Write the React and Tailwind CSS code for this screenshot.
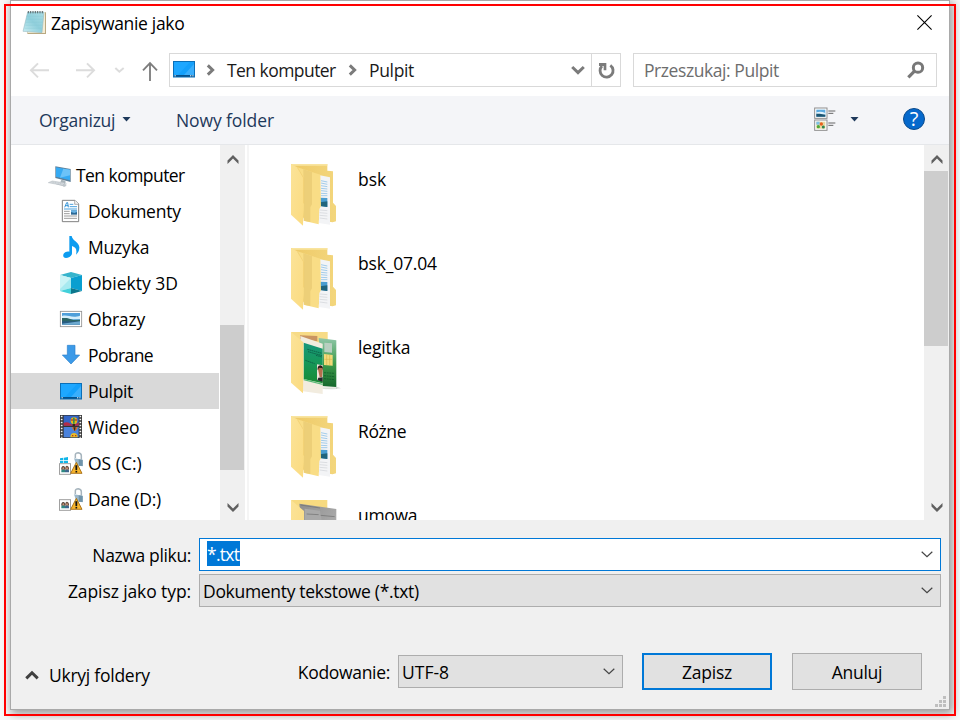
import React from "react";

/* ---------- small glyphs ---------- */

function Notepad() {
  return (
    <svg width="26" height="28" viewBox="66 26 78 84" className="shrink-0">
      <path d="M88 36 H138 V101 H82 Z" fill="#b9a981" />
      <path d="M86 35 H135 V98 H84 Z" fill="#f4ecd4" />
      <path d="M83 35 H132 L126 97 L69 93 Z" fill="url(#np)" stroke="#8fb3bb" strokeWidth="1.5" />
      <path d="M79 48 H129 M78 57 H128 M77 66 H127 M76 75 H126 M74 84 H125" stroke="#86c4d0" strokeWidth="1" />
      <path d="M85 32 v7 M92 32 v7 M99 32 v7 M106 32 v7 M113 32 v7 M120 32 v7 M127 32 v7" stroke="#5c6668" strokeWidth="3" />
      <defs>
        <linearGradient id="np" x1="0" y1="1" x2="1" y2="0">
          <stop offset="0" stopColor="#c9edf2" />
          <stop offset=".5" stopColor="#8fcfdc" />
          <stop offset="1" stopColor="#a9dce4" />
        </linearGradient>
      </defs>
    </svg>
  );
}

function DesktopIcon() {
  return (
    <svg width="22" height="17" viewBox="0 0 22 17" className="shrink-0">
      <rect width="22" height="16.5" fill="#0b6fb8" />
      <rect x="1" y="1" width="20" height="13" fill="#14a0fb" />
      <path d="M11 14 L21 3 V14 Z" fill="#3aaefc" />
      <path d="M1 1 H17 L5 14 H1 Z" fill="#1ea7ff" />
      <rect x="1" y="14" width="20" height="1.6" fill="#06518c" />
      <path d="M1.5 14.8 h1.3 M17 14.8 h1.3 M19.3 14.8 h1.3" stroke="#fff" strokeWidth="1" />
    </svg>
  );
}

function Crumb() {
  return (
    <svg width="9" height="12" viewBox="0 0 9 12" className="shrink-0">
      <path d="M1.800 1.400 L6.600 6 L1.800 10.600" fill="none" stroke="#7b7b7b" strokeWidth="3" />
    </svg>
  );
}

function ScrollArrow({ down }) {
  return (
    <svg width="12" height="11" viewBox="0 0 12 11" className="shrink-0">
      {down ? (
        <path d="M0.5 1 L6 6.4 L11.5 1 V4.6 L6 10 L0.5 4.6 Z" fill="#606060" />
      ) : (
        <path d="M0.5 10 L6 4.6 L11.5 10 V6.4 L6 1 L0.5 6.4 Z" fill="#606060" />
      )}
    </svg>
  );
}

function ComboArrow() {
  return (
    <svg width="12" height="7" viewBox="0 0 12 7" className="shrink-0">
      <path d="M0.7 0.7 L6 5.6 L11.3 0.7" fill="none" stroke="#444" strokeWidth="1.2" />
    </svg>
  );
}

/* ---------- navigation tree icons ---------- */

function ComputerIcon() {
  return (
    <svg width="26" height="26" viewBox="144 48 78 78">
      <path d="M166 61 L212 69 V108 L166 96 Z" fill="#5d7f98" />
      <path d="M168 64 L210 71 V103 L168 92 Z" fill="#35aaf3" />
      <path d="M190 68 L210 71 V88 L180 95 Z" fill="#6cc3f8" />
      <path d="M184 101 L196 104 L197 112 L181 109 Z" fill="#a9b4ba" />
      <path d="M176 108 L202 113 L190 121 L168 115 Z" fill="#c5ccd1" />
      <path d="M157 105 L195 111 L188 118 L145 110 Z" fill="#d8dde1" stroke="#a7afb5" strokeWidth="1.4" />
      <path d="M155 108 L189 114" stroke="#9ea8ae" strokeWidth="1.4" strokeDasharray="3 2" />
      <path d="M185 118 l8 -3 l7 4 l-8 4 Z" fill="#bec5ca" />
    </svg>
  );
}

function DocumentsIcon() {
  return (
    <svg width="26" height="26" viewBox="174 159 78 78">
      <path d="M187 166 H225 L236 177 V230 H187 Z" fill="#fff" stroke="#777" strokeWidth="2.8" />
      <path d="M224 166 V178 H236" fill="#f3f3f3" stroke="#8b8b8b" strokeWidth="2" />
      <path d="M194 187 L200 173 H203 L205 187 M196 182 H205" fill="none" stroke="#1683d0" strokeWidth="2.6" />
      <path d="M209 178 H220 M209 185 H231 M192 192 H231" stroke="#2f92d8" strokeWidth="2.6" />
      <path d="M192 199 H209 M192 206 H209 M192 213 H231 M192 220 H231" stroke="#8f8f8f" strokeWidth="2.6" />
      <rect x="213" y="196" width="18" height="13" fill="#2c6894" />
      <path d="M213 196 h18 v5 l-8 3 l-10 -3 Z" fill="#6ab4e5" />
    </svg>
  );
}

function MusicIcon() {
  return (
    <svg width="26" height="26" viewBox="174 267 78 78">
      <path d="M208 273 H215 C217 287 236 291 238 306 C239 316 234 324 228 329 C231 315 229 307 216 303 V324 C216 334 205 339 198 339 C187 338 187 326 197 321 C201 319 205 319 208 320 Z" fill="#0c9cf0" />
    </svg>
  );
}

function CubeIcon() {
  return (
    <svg width="26" height="26" viewBox="174 375 78 78">
      <path d="M180 390 L213 381 L246 390 L213 399 Z" fill="#36b4cc" />
      <path d="M180 390 L213 399 V429 L180 438 Z" fill="#a7eaf0" />
      <path d="M180 390 L213 399 L180 432 Z" fill="#caf4f6" />
      <path d="M246 390 L213 399 V429 L246 438 Z" fill="#099fd0" />
      <path d="M180 438 L213 429 V447 Z" fill="#42d0da" />
      <path d="M246 438 L213 429 V447 Z" fill="#0c778d" />
    </svg>
  );
}

function PicturesIcon() {
  return (
    <svg width="26" height="26" viewBox="174 483 78 78">
      <rect x="181" y="499" width="64" height="46" fill="#fff" stroke="#909090" strokeWidth="2.5" />
      <rect x="186" y="504" width="54" height="35" fill="#4f9fda" />
      <path d="M186 513 C202 507 215 521 240 512 V523 H186 Z" fill="#d4eefb" />
      <path d="M186 519 L201 519 L220 525 L240 524 V531 H186 Z" fill="#2c6666" />
      <rect x="186" y="529" width="54" height="10" fill="#285c83" />
      <path d="M186 536 L240 529 V539 H186 Z" fill="#6da9cf" />
    </svg>
  );
}

function DownloadIcon() {
  return (
    <svg width="26" height="26" viewBox="174 21 78 78">
      <path d="M202 31 H225 V60 H239 L213 87 L187 60 H202 Z" fill="#3c9ae8" stroke="#2a80cc" strokeWidth="2" />
    </svg>
  );
}

function VideoIcon() {
  return (
    <svg width="26" height="26" viewBox="174 237 78 78">
      <rect x="180" y="240" width="66" height="69" fill="#333" />
      <path d="M185 242 V308 M241 242 V308" stroke="#f5f5f5" strokeWidth="5" strokeDasharray="5 4" />
      <rect x="191" y="242" width="45" height="30" fill="#3466c8" />
      <rect x="191" y="276" width="45" height="31" fill="#4a82dc" />
      <path d="M191 264 q10 -5 20 2 t25 -4 v10 h-45 Z" fill="#b52c48" />
      <ellipse cx="222" cy="257" rx="10" ry="10" fill="#e6b71c" />
      <path d="M213 253 h18 v4 h-18 Z" fill="#bf392c" />
      <path d="M219 248 h5 v18 h-5 Z" fill="#349251" />
      <path d="M218 267 h7 v6 h-7 Z" fill="#3a2717" />
      <path d="M215 277 h19 l-7 10 h-5 Z" fill="#dc6c20" />
      <path d="M220 277 h7 l-2 10 h-2 Z" fill="#2a2a22" />
      <path d="M211 307 q0 -13 12 -13 q10 1 10 13 Z" fill="#e9bd22" />
      <path d="M216 300 h4 v4 h-4 Z M225 300 h4 v4 h-4 Z" fill="#b53528" />
    </svg>
  );
}

function DriveIcon({ windows }) {
  return (
    <svg width="26" height="26" viewBox="174 345 78 78">
      {windows && (
        <path d="M180 370 L190 368 V375 H180 Z M192 368 L204 366 V375 H192 Z M180 377 H190 V384 H180 Z M192 377 H204 V384 H192 Z" fill="#11b5e8" />
      )}
      <path d="M226 369 V359 Q227 353 235 353 Q244 354 244 362 V374" fill="none" stroke="#a6b4bd" strokeWidth="4.5" />
      <path d="M222 370 L248 374 V394 L229 391 Z" fill="#9bb7c9" />
      <path d="M236 373 L248 375 V393 L237 392 Z" fill="#6f93aa" />
      <rect x="178.500" y="386" width="33" height="32" fill="#fff" stroke="#a0a0a0" strokeWidth="3" />
      <path d="M184 404 Q183 393 190 393 Q196 393 196 404 Z" fill="#50443b" />
      <path d="M196 404 Q195 392 201 392 Q208 393 207 404 Z" fill="#695044" />
      <path d="M184 412 V406 Q189 401 195 405 V412 Z" fill="#2e8780" />
      <path d="M195 412 V406 Q201 401 207 406 V412 Z" fill="#3d668c" />
      <circle cx="190" cy="400" r="3" fill="#c99375" />
      <circle cx="201" cy="400" r="3" fill="#c99375" />
      <path d="M229 382 L246 415 H212 Z" fill="#f7b52c" stroke="#a4690e" strokeWidth="2.6" strokeLinejoin="round" />
      <path d="M226 391 H232 L231.500 405 H226.500 Z" fill="#111" />
      <rect x="226.500" y="407.500" width="5" height="5" fill="#111" />
    </svg>
  );
}

/* ---------- large folder icons ---------- */

function FolderDefs() {
  return (
    <svg width="0" height="0" className="absolute">
      <defs>
        <linearGradient id="leaf" x1="0" y1="0" x2="1" y2="1">
          <stop offset="0" stopColor="#fbe398" />
          <stop offset="1" stopColor="#fbdb80" />
        </linearGradient>
        <linearGradient id="back" x1="0" y1="0" x2="1" y2="0">
          <stop offset="0" stopColor="#eec966" />
          <stop offset="1" stopColor="#f3d67d" />
        </linearGradient>
        <linearGradient id="card" x1="0" y1="0" x2="0" y2="1">
          <stop offset="0" stopColor="#18977b" />
          <stop offset=".45" stopColor="#16985c" />
          <stop offset="1" stopColor="#178b34" />
        </linearGradient>
        <linearGradient id="card2" x1="0" y1="0" x2="0" y2="1">
          <stop offset="0" stopColor="#8fc6a8" />
          <stop offset=".5" stopColor="#3e9b4c" />
          <stop offset="1" stopColor="#12642a" />
        </linearGradient>
        <linearGradient id="scan" x1="0" y1="0" x2="1" y2="1">
          <stop offset="0" stopColor="#8d8d8d" />
          <stop offset="1" stopColor="#b9b9b9" />
        </linearGradient>
      </defs>
    </svg>
  );
}

function Folder() {
  return (
    <svg width="60" height="70" viewBox="48 30 180 210" className="shrink-0">
      <path d="M63 42 H172 V62 L189 64 V158 L198 168 V214 L188 217 L100 205 Z" fill="url(#back)" />
      <path d="M63 42 H172 V47 H70 Z" fill="#f9e49f" />
      <path d="M150 76 L180 82 V224 L146 219 Z" fill="#f3f4f6" />
      <path d="M153 92 L172 96 M153 99 L172 103 M153 107 L172 110 M153 115 L172 117 M153 122 L172 124 M153 130 L172 131 M153 137 L172 137" stroke="#8ec1e6" strokeWidth="2.400" />
      <path d="M150 143 L172 144 V171 L150 168 Z" fill="#499dd0" />
      <path d="M150 157 L172 154 V171 L150 168 Z" fill="#20647c" />
      <path d="M149 180 L172 182 M149 188 L172 190 M149 196 L172 198 M149 204 L172 207" stroke="#cfd2d6" strokeWidth="2" />
      <path d="M80 51 L151 74 L153 169 L148 177 L146 223 L104 213 Z" fill="#f9dd86" />
      <path d="M100 58 L126 66 V163 L121 172 V216 L101 212 Z" fill="#edcf78" />
      <path d="M63 42 L82 52 L101 82 V160 L99 227 L63 194 Z" fill="url(#leaf)" />
      <path d="M82 52 L101 84 V160" fill="none" stroke="#eecb6c" strokeWidth="2" />
    </svg>
  );
}

function CardFolder() {
  return (
    <svg width="60" height="70" viewBox="48 30 180 210" className="shrink-0">
      <path d="M63 42 H173 V205 L100 205 Z" fill="#f7db86" />
      <path d="M90 52 L142 54 V70 L90 62 Z" fill="#c99461" />
      <path d="M146 60 L199 67 V213 L158 211 Z" fill="url(#card2)" />
      <path d="M163 74 L186 76 V104 L163 102 Z" fill="#b8cfc0" />
      <path d="M162 108 L188 111 V143 L162 141 Z" fill="#f2da79" />
      <path d="M170 109 V141 M179 110 V142 M163 124 H187" stroke="#cfae45" strokeWidth="1.5" />
      <path d="M162 164 L194 166 M162 173 L194 176 M162 182 L194 185" stroke="#0b5425" strokeWidth="2" strokeDasharray="6 2" />
      <path d="M150 203 L199 207 V213 L158 212 Z" fill="#e9ebe4" />
      <path d="M160 215 L213 211 L200 206 V213 Z" fill="#d9d9d9" />
      <path d="M91 54 L158 77 V228 L99 220 Z" fill="#f2ecdf" />
      <path d="M101 74 L158 92 V196 L101 183 Z" fill="url(#card)" />
      <path d="M112 94 L156 106 M114 101 L156 113 M138 112 L156 117 M106 127 L134 137" stroke="#0b5a42" strokeWidth="2.4" strokeDasharray="5 1.500" />
      <path d="M101 183 L158 197 V201 L101 187 Z" fill="#58ba76" />
      <path d="M141 139 L158 142 V190 L141 186 Z" fill="#eee3d8" />
      <path d="M144 154 Q144 144 152 145 Q159 147 158 158 L156 177 H149 Z" fill="#b66d4d" />
      <path d="M143 157 Q141 143 151 142 Q160 144 159 157 L157 150 L147 149 Z" fill="#281b18" />
      <path d="M142 187 L145 179 L158 178 V191 Z" fill="#252a2c" />
      <path d="M63 42 L100 73 V160 L99 226 L63 194 Z" fill="url(#leaf)" />
    </svg>
  );
}

function ScanFolder() {
  return (
    <svg width="60" height="70" viewBox="48 30 180 210" className="shrink-0">
      <path d="M63 42 H172 V205 H100 Z" fill="#f7da80" />
      <path d="M88 53 L199 69 V200 H100 Z" fill="url(#scan)" />
      <path d="M104 68 L150 74 L160 130 L104 130 Z" fill="#a9a9a9" />
      <path d="M92 57 L150 66 M152 88 L194 92 M110 84 L146 86" stroke="#6e6e6e" strokeWidth="2" />
      <path d="M63 42 L102 75 V160 L99 226 L63 194 Z" fill="url(#leaf)" />
    </svg>
  );
}

/* ---------- building blocks ---------- */

const places = [
  { label: "Ten komputer", Icon: ComputerIcon, row: "pl-[37px]", text: "pl-[2px] tracking-[-0.55px]" },
  { label: "Dokumenty", Icon: DocumentsIcon, row: "pl-[47px]", text: "pl-[4px] tracking-[-0.25px]" },
  { label: "Muzyka", Icon: MusicIcon, row: "pl-[47px]", text: "pl-[4px] tracking-[-0.2px]" },
  { label: "Obiekty 3D", Icon: CubeIcon, row: "pl-[47px]", text: "pl-[4px]" },
  { label: "Obrazy", Icon: PicturesIcon, row: "pl-[47px]", text: "pl-[4px] tracking-[-0.2px]" },
  { label: "Pobrane", Icon: DownloadIcon, row: "pl-[47px]", text: "pl-[4px] tracking-[-0.6px]" },
  { label: "Pulpit", row: "pl-[49px] bg-[#d9d9d9]", text: "pl-[6px] tracking-[-0.35px]", Icon: DesktopIcon },
  { label: "Wideo", Icon: VideoIcon, row: "pl-[47px]", text: "pl-[4px]" },
  { label: "OS (C:)", Icon: () => <DriveIcon windows />, row: "pl-[47px]", text: "pl-[4px]" },
  { label: "Dane (D:)", Icon: DriveIcon, row: "pl-[47px]", text: "pl-[4px] tracking-[-0.25px]" },
];

const files = [
  { name: "bsk", Icon: Folder, text: "" },
  { name: "bsk_07.04", Icon: Folder, text: "tracking-[-0.18px]" },
  { name: "legitka", Icon: CardFolder, text: "tracking-[-0.15px]" },
  { name: "Różne", Icon: Folder, text: "tracking-[-0.4px]" },
  { name: "umowa", Icon: ScanFolder, text: "tracking-[-0.3px]" },
];

function TitleBar() {
  return (
    <div className="flex h-[46px] items-center pr-[17px] pl-[11px]">
      <div className="mb-[2px]">
        <Notepad />
      </div>
      <span className="mb-[2px] ml-[3px] grow tracking-[-0.33px]">Zapisywanie jako</span>
      <svg width="15" height="15" viewBox="0 0 15 15" className="mb-[3px]">
        <path d="M0.400 0.400 L14.600 14.600 M14.600 0.400 L0.400 14.600" stroke="#000" strokeWidth="1.1" />
      </svg>
    </div>
  );
}

function NavBar() {
  return (
    <div className="flex h-[49px] items-start pt-[6px] pr-[12px]">
      <div className="flex h-[34px] w-[158px] items-center">
        <svg width="24" height="24" viewBox="84 174 72 72" className="ml-[17px]">
          <path d="M147 211 H93 M114 190 L93 211 L114 232" fill="none" stroke="#dcdcdc" strokeWidth="6" />
        </svg>
        <svg width="24" height="24" viewBox="222 174 72 72" className="ml-[22px]">
          <path d="M228 211 H282 M261 190 L282 211 L261 232" fill="none" stroke="#dcdcdc" strokeWidth="6" />
        </svg>
        <svg width="12" height="24" viewBox="342 174 36 72" className="ml-[16px]">
          <path d="M346 204 L358 215 L371 204" fill="none" stroke="#dcdcdc" strokeWidth="6" />
        </svg>
        <svg width="20" height="24" viewBox="420 174 60 72" className="ml-[14px]">
          <path d="M450 243 V189 M429 211 L450 189 L471 211" fill="none" stroke="#7d7d7d" strokeWidth="5.500" />
        </svg>
      </div>
      <div className="flex h-[34px] w-[452px] items-center border border-[#d9d9d9]">
        <div className="mb-[2px] ml-[3px]">
          <DesktopIcon />
        </div>
        <div className="ml-[11px]">
          <Crumb />
        </div>
        <span className="ml-[12px] w-[121px] tracking-[-0.55px] text-[#1a1a1a]">Ten komputer</span>
        <Crumb />
        <span className="ml-[12px] grow tracking-[-0.35px] text-[#1a1a1a]">Pulpit</span>
        <svg width="14" height="12" viewBox="0 0 14 12" className="mr-[6px]">
          <path d="M1.200 3 L7 8.600 L12.800 3" fill="none" stroke="#7b7b7b" strokeWidth="3" />
        </svg>
        <div className="flex h-full w-[29.500px] shrink-0 items-center justify-center border-l border-[#d9d9d9]">
          <svg width="18" height="18" viewBox="831 183 54 54">
            <path d="M871 196 A 19.500 19.500 0 1 1 846 198" fill="none" stroke="#7b7b7b" strokeWidth="8.500" />
            <path d="M837 189 H859 V211 H851 V198 H837 Z" fill="#7b7b7b" />
          </svg>
        </div>
      </div>
      <div className="ml-[12px] flex h-[34px] grow items-center border border-[#d9d9d9] pr-[11px] pl-[10px]">
        <span className="grow tracking-[-0.43px] text-[#6d6d6d]">Przeszukaj: Pulpit</span>
        <svg width="18" height="18" viewBox="801 184 54 54">
          <circle cx="834" cy="204" r="14" fill="none" stroke="#787878" strokeWidth="9" />
          <path d="M825 213 L805 233" stroke="#787878" strokeWidth="9.500" />
        </svg>
      </div>
    </div>
  );
}

function Toolbar() {
  return (
    <div className="flex h-[49px] items-center border-b border-[#e5e7ea] bg-[#f4f5f8] pr-[24px] pl-[28px] text-[#1e395b]">
      <span className="w-[83px] tracking-[-0.25px]">Organizuj</span>
      <svg width="9" height="5" viewBox="0 0 9 5" className="mb-[2px]">
        <path d="M0.500 0 H8.500 L4.500 4.500 Z" fill="#1e395b" />
      </svg>
      <span className="ml-[45px] grow tracking-[-0.1px]">Nowy folder</span>
      <svg width="22" height="24" viewBox="521 319 66 72" className="mb-[2px]">
        <rect x="523" y="322" width="37" height="31" fill="#fff" stroke="#8e8e8e" strokeWidth="3" />
        <rect x="528" y="327" width="27" height="21" fill="#5aaae0" />
        <path d="M528 335 q13 -5 27 2 v5 h-27 Z" fill="#dff2fc" />
        <path d="M528 339 h10 l17 3 v6 h-27 Z" fill="#1d5571" />
        <rect x="523" y="358" width="37" height="31" fill="#fff" stroke="#8e8e8e" strokeWidth="3" />
        <rect x="528" y="363" width="27" height="21" fill="#e8d9a0" />
        <path d="M528 363 h10 v9 h-10 Z" fill="#7bc1e8" />
        <circle cx="543" cy="370" r="5" fill="#e8601f" />
        <circle cx="534" cy="378" r="5" fill="#4fa83a" />
        <circle cx="549" cy="379" r="4.500" fill="#2f8550" />
        <path d="M564 331 H585 M564 338 H579 M564 367 H585 M564 374 H579" stroke="#666" strokeWidth="3" />
      </svg>
      <svg width="9" height="5" viewBox="0 0 9 5" className="mb-px ml-[14px]">
        <path d="M0.500 0 H8.500 L4.500 4.500 Z" fill="#1e395b" />
      </svg>
      <div className="mb-[3px] ml-[44px] flex h-[22px] w-[22px] items-center justify-center rounded-full border border-[#0a4a8c] bg-[#0669cc] text-[20px] leading-[20px] text-white">
        ?
      </div>
    </div>
  );
}

function PlacesTree() {
  return (
    <div className="w-[209px] pt-[12px] pr-px">
      {places.map(({ label, Icon, row, text }) => (
        <div key={label} className={"flex h-[36px] items-center " + row}>
          <div className="shrink-0">
            <Icon />
          </div>
          <span className={text}>{label}</span>
        </div>
      ))}
    </div>
  );
}

function ScrollBar({ thumb, className }) {
  return (
    <div className={"flex h-full flex-col items-start bg-[#f0f0f0] " + className}>
      <div className="flex h-[26px] w-full items-center justify-center pt-[3px]">
        <ScrollArrow />
      </div>
      <div className="w-[24px] grow">
        <div className={"w-full bg-[#cdcdcd] " + thumb} />
      </div>
      <div className="flex h-[26px] w-full items-center justify-center">
        <ScrollArrow down />
      </div>
    </div>
  );
}

function FileList() {
  return (
    <div className="h-full grow overflow-hidden pt-[15px] pl-[37px]">
      {files.map(({ name, Icon, text }) => (
        <div key={name} className="flex h-[84px] items-start">
          <Icon />
          <span className={"mt-[7px] ml-[12px] " + text}>{name}</span>
        </div>
      ))}
    </div>
  );
}

function Footer() {
  return (
    <div className="flex grow flex-col bg-[#f0f0f0] pt-[18px]">
      <div className="mb-[3px] flex h-[33px] items-center pr-[8px]">
        <span className="w-[180px] text-right tracking-[-0.36px]">Nazwa pliku:</span>
        <div className="ml-[8px] flex h-full grow items-center border border-[#0078d7] bg-white pr-[7px] pl-[7px]">
          <span className="mb-[2px] h-[25px] w-[33px] bg-[#0078d7] leading-[27px] tracking-[-0.75px] text-white">*.txt</span>
          <span className="grow" />
          <ComboArrow />
        </div>
      </div>
      <div className="flex h-[33px] items-center pr-[8px]">
        <span className="mt-px w-[180px] text-right tracking-[-0.1px]">Zapisz jako typ:</span>
        <div className="ml-[8px] flex h-full grow items-center border border-[#adadad] bg-[#e1e1e1] pr-[7px] pl-[3px]">
          <span className="grow pt-px tracking-[-0.31px]">Dokumenty tekstowe (*.txt)</span>
          <ComboArrow />
        </div>
      </div>
      <div className="mt-[46px] flex h-[37px] items-center pr-[27px]">
        <svg width="14" height="10" viewBox="0 0 14 10" className="mt-[6px] ml-[14px]">
          <path d="M1.300 8.400 L7 2.800 L12.700 8.400" fill="none" stroke="#404040" strokeWidth="3" />
        </svg>
        <span className="mt-[7px] ml-[10px] grow tracking-[-0.25px]">Ukryj foldery</span>
        <span className="mr-[8px] tracking-[-0.32px]">Kodowanie:</span>
        <div className="flex h-[33px] w-[225px] items-center border border-[#adadad] bg-[#e1e1e1] pr-[7px] pl-[3px]">
          <span className="grow">UTF-8</span>
          <ComboArrow />
        </div>
        <button className="ml-[19px] h-[37px] w-[130px] border-2 border-[#0078d7] bg-[#e1e1e1] tracking-[-0.25px]">Zapisz</button>
        <button className="ml-[20px] h-[37px] w-[130px] border border-[#adadad] bg-[#e1e1e1] tracking-[-0.3px]">Anuluj</button>
      </div>
      <div className="flex justify-end pt-[6px] pr-[3px]">
        <svg width="11" height="11" viewBox="0 0 11 11">
          <path d="M8 0h3v3h-3z M4 4h3v3h-3z M8 4h3v3h-3z M0 8h3v3h-3z M4 8h3v3h-3z M8 8h3v3h-3z" fill="#bfbfbf" />
        </svg>
      </div>
    </div>
  );
}

export default function App() {
  return (
    <div className="relative h-[720px] w-[960px] overflow-hidden bg-[#f8f8f8] pl-[10px] font-['Open_Sans','Noto_Sans',sans-serif] text-[17.5px] leading-[24px] whitespace-nowrap text-black">
      <FolderDefs />
      <div className="flex h-[710px] w-[940px] flex-col border border-[#a9a9a9] bg-white shadow-[2px_3px_9px_1px_rgba(0,0,0,0.38)]">
        <TitleBar />
        <NavBar />
        <Toolbar />
        <div className="flex h-[375px]">
          <PlacesTree />
          <ScrollBar className="w-[25px]" thumb="mt-[154px] h-[145px]" />
          <div className="ml-[2px] h-full w-[2px] bg-[#f5f5f5]" />
          <FileList />
          <ScrollBar className="w-[25px]" thumb="h-[175px]" />
        </div>
        <Footer />
      </div>
      <div className="pointer-events-none absolute top-[4px] left-[4px] h-[712px] w-[952px] border-2 border-[#ff0000]" />
    </div>
  );
}
